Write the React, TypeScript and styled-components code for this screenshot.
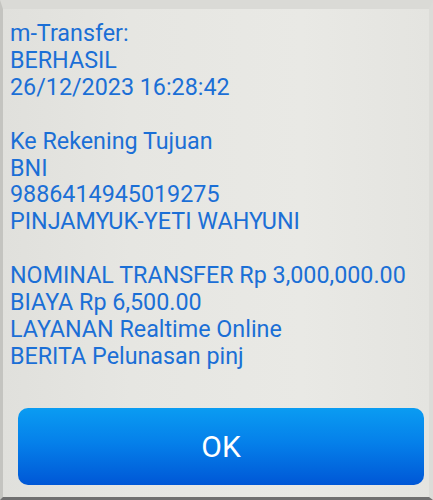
import styled, { createGlobalStyle } from "styled-components";

const GlobalStyle = createGlobalStyle`
  html, body {
    margin: 0;
    padding: 0;
    background: #e4e4e0;
  }
`;

const Screen = styled.div`
  box-sizing: border-box;
  width: 433px;
  height: 500px;
  display: flex;
  flex-direction: column;
  background: linear-gradient(to right, #e0e0dc 0%, #e6e6e2 30%, #e9e9e5 70%, #e4e4e0 100%);
  border-top: 9px solid #dadad6;
  border-left: 3px solid #c4c4c0;
  border-right: 4px solid #dcdcd8;
  border-bottom: 3px solid #707070;
  font-family: Roboto, "Liberation Sans", sans-serif;
`;

const Message = styled.div`
  padding: 11px 0 0 7px;
  color: #1b6fd6;
  font-size: 23.3px;
  line-height: 26.9px;
`;

const Line = styled.div`
  white-space: nowrap;
`;

const Gap = styled.div`
  height: 26.9px;
`;

const Footer = styled.div`
  margin-top: auto;
  padding: 0 5px 12px 15px;
`;

const OkButton = styled.button`
  width: 100%;
  height: 77px;
  border: none;
  border-radius: 10px;
  background: linear-gradient(to bottom, #0a9cf2 0%, #0580ea 45%, #0057d6 100%);
  color: #ffffff;
  font-family: Roboto, "Liberation Sans", sans-serif;
  font-size: 30px;
  padding: 0;
`;

const block1 = ["m-Transfer:", "BERHASIL", "26/12/2023 16:28:42"];
const block2 = [
  "Ke Rekening Tujuan",
  "BNI",
  "9886414945019275",
  "PINJAMYUK-YETI WAHYUNI",
];
const block3 = [
  "NOMINAL TRANSFER Rp 3,000,000.00",
  "BIAYA Rp 6,500.00",
  "LAYANAN Realtime Online",
  "BERITA Pelunasan pinj",
];

export default function App() {
  return (
    <>
      <GlobalStyle />
      <Screen>
        <Message>
          {block1.map((t) => (
            <Line key={t}>{t}</Line>
          ))}
          <Gap />
          {block2.map((t) => (
            <Line key={t}>{t}</Line>
          ))}
          <Gap />
          {block3.map((t) => (
            <Line key={t}>{t}</Line>
          ))}
        </Message>
        <Footer>
          <OkButton>OK</OkButton>
        </Footer>
      </Screen>
    </>
  );
}
